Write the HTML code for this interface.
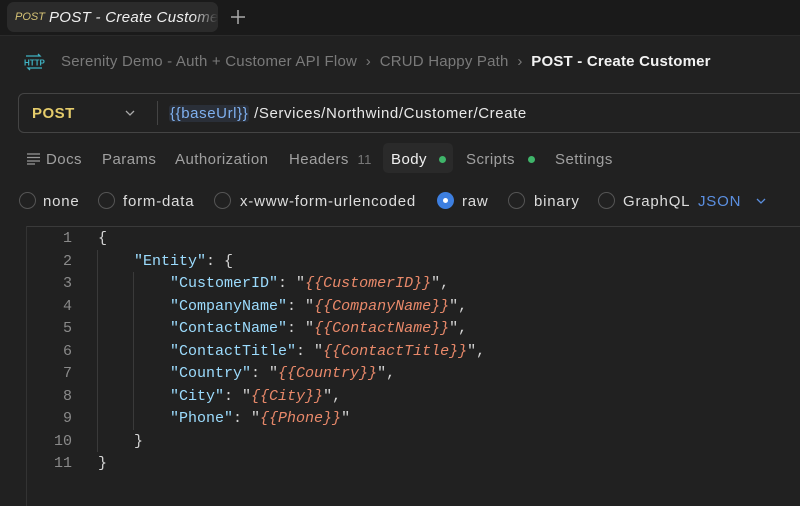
<!DOCTYPE html>
<html><head><meta charset="utf-8"><style>
*{margin:0;padding:0;box-sizing:border-box}
body{width:800px;height:506px;overflow:hidden;background:#212121;font-family:"Liberation Sans",sans-serif;color:#ccc;position:relative}
.abs{position:absolute;white-space:nowrap}
.topbar{position:absolute;left:0;top:0;width:800px;height:36px;background:#1a1a1a;border-bottom:1px solid #2a2a2a}
.tab{position:absolute;left:7px;top:2px;width:211px;height:30px;background:#2b2b2b;border-radius:7px;overflow:hidden}
.code{font-family:"Liberation Mono",monospace;font-size:15px}
.ln{position:absolute;width:72px;text-align:right;color:#8a8a8a;font-family:"Liberation Mono",monospace;font-size:15px;left:0}
.k{color:#9cdcfe}.p{color:#d4d4d4}.v{color:#e9896a;font-style:italic}
.radio{position:absolute;width:17px;height:17px;border:1.5px solid #555;border-radius:50%;top:192px}
.tabs span{position:absolute;top:151px;font-size:15px;color:#a0a0a0;letter-spacing:.45px;white-space:nowrap}
.opt{position:absolute;top:193px;font-size:15px;color:#ddd;letter-spacing:.8px;white-space:nowrap}
</style></head><body>
<div class="topbar">
  <div class="tab">
    <span class="abs" style="left:8px;top:9px;font-size:11px;font-style:italic;color:#d8c577">POST</span>
    <span class="abs" style="left:42px;top:7px;font-size:15px;font-style:italic;color:#f0f0f0;letter-spacing:.3px">POST - Create Customer</span>
    <div class="abs" style="left:185px;top:0;width:26px;height:30px;background:linear-gradient(90deg,rgba(43,43,43,0),#2b2b2b)"></div>
  </div>
  <svg class="abs" style="left:229px;top:8px" width="18" height="18" viewBox="0 0 18 18"><path d="M9 2v14M2 9h14" stroke="#aaa" stroke-width="1.5"/></svg>
</div>
<svg class="abs" style="left:23px;top:51px" width="22" height="22" viewBox="0 0 22 22">
<path d="M3 5h14l-2-2M19 17H5l2 2" stroke="#3fb3c4" stroke-width="1.3" fill="none"/>
<text x="1" y="14.5" font-size="8" font-family="Liberation Sans" font-weight="bold" fill="#3fb3c4">HTTP</text></svg>
<span class="abs" style="left:61px;top:53px;font-size:15px;color:#7a7a7a;letter-spacing:.2px">Serenity Demo - Auth + Customer API Flow &nbsp;›&nbsp; CRUD Happy Path &nbsp;›&nbsp; <b style="color:#f2f2f2">POST - Create Customer</b></span>
<div class="abs" style="left:18px;top:93px;width:800px;height:40px;border:1px solid #444;border-radius:6px"></div>
<span class="abs" style="left:32px;top:105px;font-size:15px;font-weight:bold;color:#e5cc6b;letter-spacing:.5px">POST</span>
<svg class="abs" style="left:124px;top:108px" width="12" height="10" viewBox="0 0 12 10"><path d="M2 3l4 4 4-4" stroke="#aaa" stroke-width="1.3" fill="none"/></svg>
<div class="abs" style="left:157px;top:101px;width:1px;height:24px;background:#444"></div>
<span class="abs" style="left:169px;top:105px;font-size:15px;color:#e8e8e8;letter-spacing:.6px"><span style="color:#7fb0ef;background:#2a2f38;border-radius:3px;padding:0 1px">{{baseUrl}}</span> /Services/Northwind/Customer/Create</span>
<svg class="abs" style="left:26px;top:152px" width="14" height="13" viewBox="0 0 14 13"><path d="M1 2h13M1 5.5h13M1 9h13M1 12h8" stroke="#999" stroke-width="1.3"/></svg>
<div class="abs" style="left:383px;top:143px;width:70px;height:30px;background:#2a2a2a;border-radius:5px"></div>
<div class="tabs">
<span style="left:46px">Docs</span><span style="left:102px">Params</span><span style="left:175px">Authorization</span>
<span style="left:289px">Headers <small style="font-size:13px;color:#777;margin-left:4px">11</small></span>
<span style="left:391px;color:#f0f0f0">Body</span><span style="left:466px">Scripts</span><span style="left:555px">Settings</span>
</div>
<div class="abs" style="left:439px;top:156px;width:7px;height:7px;border-radius:50%;background:#3fb56a"></div>
<div class="abs" style="left:528px;top:156px;width:7px;height:7px;border-radius:50%;background:#3fb56a"></div>
<div class="radio" style="left:19px"></div><span class="opt" style="left:43px">none</span>
<div class="radio" style="left:98px"></div><span class="opt" style="left:123px">form-data</span>
<div class="radio" style="left:214px"></div><span class="opt" style="left:240px">x-www-form-urlencoded</span>
<div class="radio" style="left:437px;border:none;background:#3d7fe0"><div style="position:absolute;left:6px;top:6px;width:5px;height:5px;background:#fff;border-radius:50%"></div></div><span class="opt" style="left:462px">raw</span>
<div class="radio" style="left:508px"></div><span class="opt" style="left:534px">binary</span>
<div class="radio" style="left:598px"></div><span class="opt" style="left:623px">GraphQL</span>
<span class="opt" style="left:698px;color:#5b8fe0">JSON</span>
<svg class="abs" style="left:755px;top:196px" width="12" height="10" viewBox="0 0 12 10"><path d="M2 3l4 4 4-4" stroke="#5b8fe0" stroke-width="1.3" fill="none"/></svg>
<div class="abs" style="left:27px;top:226px;width:773px;height:1px;background:#3a3a3a"></div>
<div class="abs" style="left:26px;top:226px;width:1px;height:280px;background:#333"></div>
<div class="abs" style="left:97px;top:250px;width:1px;height:202px;background:#3a3a3a"></div>
<div class="abs" style="left:133px;top:272px;width:1px;height:158px;background:#3a3a3a"></div>
<div style="position:absolute;left:0;top:228px;line-height:22.5px">
<div class="ln" style="top:0">1</div><div class="ln" style="top:22.5px">2</div><div class="ln" style="top:45px">3</div><div class="ln" style="top:67.5px">4</div><div class="ln" style="top:90px">5</div><div class="ln" style="top:112.5px">6</div><div class="ln" style="top:135px">7</div><div class="ln" style="top:157.5px">8</div><div class="ln" style="top:180px">9</div><div class="ln" style="top:202.5px">10</div><div class="ln" style="top:225px">11</div>
<pre class="code p" style="position:absolute;left:98px;top:0;line-height:22.5px;white-space:pre">{
    <span class="k">"Entity"</span>: {
        <span class="k">"CustomerID"</span>: "<span class="v">{{CustomerID}}</span>",
        <span class="k">"CompanyName"</span>: "<span class="v">{{CompanyName}}</span>",
        <span class="k">"ContactName"</span>: "<span class="v">{{ContactName}}</span>",
        <span class="k">"ContactTitle"</span>: "<span class="v">{{ContactTitle}}</span>",
        <span class="k">"Country"</span>: "<span class="v">{{Country}}</span>",
        <span class="k">"City"</span>: "<span class="v">{{City}}</span>",
        <span class="k">"Phone"</span>: "<span class="v">{{Phone}}</span>"
    }
}</pre>
</div>
</body></html>
